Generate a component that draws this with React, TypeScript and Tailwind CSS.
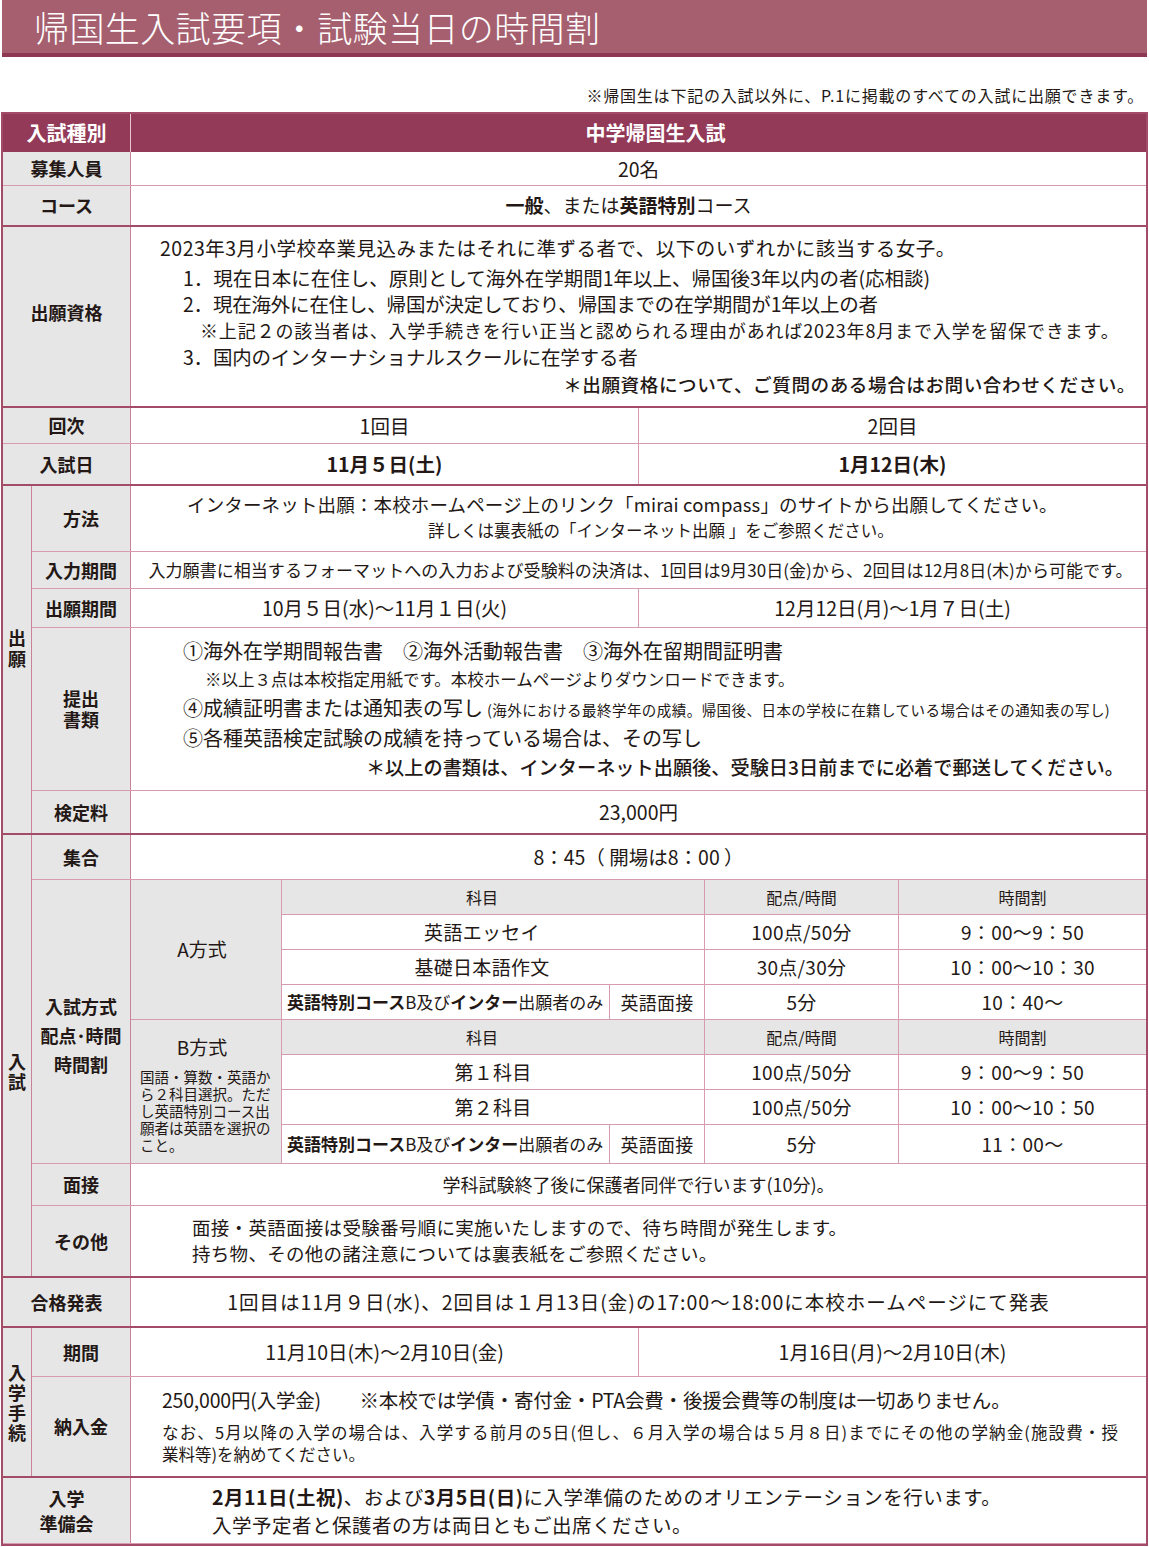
import React from "react";

const gray = "bg-[#e6e6e6]";

function Row({
  h,
  label,
  children,
  dark,
  labelClass = "",
}: {
  h: string;
  label: React.ReactNode;
  children: React.ReactNode;
  dark?: boolean;
  labelClass?: string;
}) {
  return (
    <div
      className={`flex ${h} ${dark ? "border-b-2 border-[#a24c67]" : "border-b border-[#d69bb0]"}`}
    >
      <div
        className={`w-[128px] shrink-0 bg-[#e6e6e6] border-r border-[#c98298] flex flex-col items-center justify-center font-bold text-[18px] leading-[25px] text-center ${labelClass}`}
      >
        {label}
      </div>
      <div className="flex-1 min-w-0 flex">{children}</div>
    </div>
  );
}

function Sub({
  h,
  label,
  children,
  last,
  labelClass = "",
}: {
  h: string;
  label: React.ReactNode;
  children: React.ReactNode;
  last?: boolean;
  labelClass?: string;
}) {
  return (
    <div className={`flex ${h} ${last ? "" : "border-b border-[#d69bb0]"}`}>
      <div
        className={`w-[99px] shrink-0 bg-[#e6e6e6] border-r border-[#c98298] flex flex-col items-center justify-center font-bold text-[18px] leading-[21px] text-center ${labelClass}`}
      >
        {label}
      </div>
      <div className="flex-1 min-w-0 flex">{children}</div>
    </div>
  );
}

function Halves({ a, b, bold }: { a: React.ReactNode; b: React.ReactNode; bold?: boolean }) {
  return (
    <div className={`flex-1 flex text-[19.5px] ${bold ? "font-bold" : ""}`}>
      <div className="w-[508px] shrink-0 border-r border-[#d69bb0] flex items-center justify-center">{a}</div>
      <div className="flex-1 flex items-center justify-center">{b}</div>
    </div>
  );
}

function ExamHead() {
  return (
    <div className="flex h-[35px] border-b border-[#d69bb0] bg-[#e6e6e6] text-[16px]">
      <div className="w-[423px] shrink-0 border-r border-[#d69bb0] flex items-center justify-center pr-[22px]">科目</div>
      <div className="w-[194px] shrink-0 border-r border-[#d69bb0] flex items-center justify-center">配点/時間</div>
      <div className="flex-1 flex items-center justify-center">時間割</div>
    </div>
  );
}

function ExamRow({ s, p, t, shift }: { s: string; p: string; t: string; shift?: boolean }) {
  return (
    <div className="flex h-[35px] border-b border-[#d69bb0] text-[19px] tracking-[0.3px]">
      <div
        className={`w-[423px] shrink-0 border-r border-[#d69bb0] flex items-center justify-center ${shift ? "pr-[22px]" : ""}`}
      >
        {s}
      </div>
      <div className="w-[194px] shrink-0 border-r border-[#d69bb0] flex items-center justify-center">{p}</div>
      <div className="flex-1 flex items-center justify-center">{t}</div>
    </div>
  );
}

function ExamInterview({ t, last }: { t: string; last?: boolean }) {
  return (
    <div className={`flex ${last ? "h-[38px]" : "h-[34px]"} text-[19px] tracking-[0.3px]`}>
      <div className="w-[328px] shrink-0 border-r border-[#d69bb0] flex items-center pl-[5px] text-[17px] tracking-normal whitespace-nowrap">
        <b>英語特別コース</b>B及び<b>インター</b>出願者のみ
      </div>
      <div className="w-[95px] shrink-0 border-r border-[#d69bb0] flex items-center justify-center text-[18px]">英語面接</div>
      <div className="w-[194px] shrink-0 border-r border-[#d69bb0] flex items-center justify-center">5分</div>
      <div className="flex-1 flex items-center justify-center">{t}</div>
    </div>
  );
}

export default function App() {
  return (
    <div className="w-[1149px] min-h-[1547px] bg-white text-[#231815] font-['Noto_Sans_CJK_JP','Noto_Sans',sans-serif]">
      <div className="mx-[2px] h-[57px] bg-[#a65f6f] border-b-4 border-[#8f3853] flex items-center pl-[32px]">
        <h1 className="text-white text-[35px] font-light leading-none tracking-[0.4px]">帰国生入試要項・試験当日の時間割</h1>
      </div>
      <div className="h-[55px] flex items-end justify-end pr-[5px] pb-[7px] text-[16px] leading-[20px] tracking-[0.8px]">
        ※帰国生は下記の入試以外に、P.1に掲載のすべての入試に出願できます。
      </div>

      <div className="ml-[1px] w-[1147px] border-2 border-[#a24c67]">
        {/* header */}
        <div className="flex h-[38px] bg-[#933a58] text-white font-bold text-[20px]">
          <div className="w-[128px] shrink-0 border-r border-[#e9c6d1] flex items-center justify-center">入試種別</div>
          <div className="flex-1 flex items-center justify-center pl-[34px]">中学帰国生入試</div>
        </div>

        <Row h="h-[34px]" label="募集人員">
          <div className="flex-1 flex items-center justify-center text-[19.5px]">20名</div>
        </Row>
        <Row h="h-[41px]" label="コース" dark>
          <div className="flex-1 flex items-center justify-center text-[19px] pr-[20px]">
            <b>一般</b>、または<b>英語特別</b>コース
          </div>
        </Row>
        <Row h="h-[181px]" label="出願資格" dark labelClass="pb-[8px]">
          <div className="flex-1 flex flex-col pt-[7px] text-[19.5px] whitespace-nowrap">
            <div className="pl-[29px] h-[28px] leading-[28px] mb-[2px] tracking-[0.5px]">
              2023年3月小学校卒業見込みまたはそれに準ずる者で、以下のいずれかに該当する女子。
            </div>
            <div className="pl-[52px] h-[27px] leading-[27px]">
              1．現在日本に在住し、原則として海外在学期間1年以上、帰国後3年以内の者(応相談)
            </div>
            <div className="pl-[52px] h-[26px] leading-[26px] tracking-[-0.2px]">
              2．現在海外に在住し、帰国が決定しており、帰国までの在学期間が1年以上の者
            </div>
            <div className="pl-[69px] h-[27px] leading-[27px] text-[18px] tracking-[0.85px]">
              ※上記２の該当者は、入学手続きを行い正当と認められる理由があれば2023年8月まで入学を留保できます。
            </div>
            <div className="pl-[52px] h-[26px] leading-[26px] tracking-[-0.2px]">3．国内のインターナショナルスクールに在学する者</div>
            <div className="pr-[10px] text-right h-[27px] leading-[27px] text-[18.6px] font-medium tracking-[0.55px]">
              ＊出願資格について、ご質問のある場合はお問い合わせください。
            </div>
          </div>
        </Row>
        <Row h="h-[36px]" label="回次">
          <Halves a="1回目" b="2回目" />
        </Row>
        <Row h="h-[42px]" label="入試日" dark>
          <Halves a="11月５日(土)" b="1月12日(木)" bold />
        </Row>

        {/* 出願 group */}
        <div className="flex h-[349px] border-b-2 border-[#a24c67]">
          <div className={`w-[29px] shrink-0 ${gray} border-r border-[#c98298] flex flex-col items-center justify-center font-bold text-[18px] leading-[21px] pb-[24px]`}>
            <span>出</span>
            <span>願</span>
          </div>
          <div className="flex-1 flex flex-col min-w-0">
            <Sub h="h-[66px]" label="方法">
              <div className="flex-1 flex flex-col justify-center pb-[3px] whitespace-nowrap">
                <div className="pl-[56px] text-[18.5px] leading-[26px] tracking-[0.15px]">
                  インターネット出願：本校ホームページ上のリンク「mirai compass」のサイトから出願してください。
                </div>
                <div className="pl-[297px] text-[16.5px] leading-[26px]">詳しくは裏表紙の「インターネット出願 」をご参照ください。</div>
              </div>
            </Sub>
            <Sub h="h-[37px]" label="入力期間">
              <div className="flex-1 flex items-center justify-center text-[17px] whitespace-nowrap pl-[4px] tracking-[0.05px]">
                入力願書に相当するフォーマットへの入力および受験料の決済は、1回目は9月30日(金)から、2回目は12月8日(木)から可能です。
              </div>
            </Sub>
            <Sub h="h-[39px]" label="出願期間">
              <Halves a="10月５日(水)〜11月１日(火)" b="12月12日(月)〜1月７日(土)" />
            </Sub>
            <Sub h="h-[163px]" label={<><span>提出</span><span>書類</span></>}>
              <div className="flex-1 flex flex-col pt-[9px] whitespace-nowrap">
                <div className="pl-[52px] h-[28px] leading-[28px] text-[20px]">
                  ①海外在学期間報告書　②海外活動報告書　③海外在留期間証明書
                </div>
                <div className="pl-[74px] h-[28px] leading-[28px] text-[16.5px]">
                  ※以上３点は本校指定用紙です。本校ホームページよりダウンロードできます。
                </div>
                <div className="pl-[52px] h-[30px] leading-[30px] text-[20px]">
                  ④成績証明書または通知表の写し
                  <span className="text-[14.5px] ml-[4px] tracking-[0.45px]">
                    (海外における最終学年の成績。帰国後、日本の学校に在籍している場合はその通知表の写し)
                  </span>
                </div>
                <div className="pl-[52px] h-[30px] leading-[30px] text-[20px]">
                  ⑤各種英語検定試験の成績を持っている場合は、その写し
                </div>
                <div className="pr-[22px] text-right h-[28px] leading-[28px] text-[19.2px] font-medium">
                  ＊以上の書類は、インターネット出願後、受験日3日前までに必着で郵送してください。
                </div>
              </div>
            </Sub>
            <Sub h="h-[42px]" label="検定料" last>
              <div className="flex-1 flex items-center justify-center text-[19.5px]">23,000円</div>
            </Sub>
          </div>
        </div>

        {/* 入試 group */}
        <div className="flex h-[443px] border-b-2 border-[#a24c67]">
          <div className={`w-[29px] shrink-0 ${gray} border-r border-[#c98298] flex flex-col items-center justify-center font-bold text-[18px] leading-[20px] pt-[30px]`}>
            <span>入</span>
            <span>試</span>
          </div>
          <div className="flex-1 flex flex-col min-w-0">
            <Sub h="h-[45px]" label="集合">
              <div className="flex-1 flex items-center justify-center text-[19.5px]">8：45（ 開場は8：00 ）</div>
            </Sub>
            <Sub
              h="h-[284px]"
              labelClass="leading-[29px] pt-[28px]"
              label={
                <>
                  <span>入試方式</span>
                  <span>配点･時間</span>
                  <span>時間割</span>
                </>
              }
            >
              <div className="flex-1 flex flex-col">
                <div className="flex h-[140px] border-b border-[#d69bb0]">
                  <div className={`w-[151px] shrink-0 ${gray} border-r border-[#d69bb0] flex items-center justify-center text-[19px] pr-[8px]`}>
                    A方式
                  </div>
                  <div className="flex-1 flex flex-col">
                    <ExamHead />
                    <ExamRow s="英語エッセイ" p="100点/50分" t="9：00〜9：50" shift />
                    <ExamRow s="基礎日本語作文" p="30点/30分" t="10：00〜10：30" shift />
                    <ExamInterview t="10：40〜" />
                  </div>
                </div>
                <div className="flex h-[143px]">
                  <div className={`w-[151px] shrink-0 ${gray} border-r border-[#d69bb0] flex flex-col pt-[15px]`}>
                    <div className="text-[19px] leading-[24px] text-center pr-[8px]">B方式</div>
                    <div className="mt-[9px] pl-[9px] text-[14.5px] leading-[17px] whitespace-nowrap">
                      国語・算数・英語か
                      <br />
                      ら２科目選択。ただ
                      <br />
                      し英語特別コース出
                      <br />
                      願者は英語を選択の
                      <br />
                      こと。
                    </div>
                  </div>
                  <div className="flex-1 flex flex-col">
                    <ExamHead />
                    <ExamRow s="第１科目" p="100点/50分" t="9：00〜9：50" />
                    <ExamRow s="第２科目" p="100点/50分" t="10：00〜10：50" />
                    <ExamInterview t="11：00〜" last />
                  </div>
                </div>
              </div>
            </Sub>
            <Sub h="h-[42px]" label="面接">
              <div className="flex-1 flex items-center justify-center text-[18px]">
                学科試験終了後に保護者同伴で行います(10分)。
              </div>
            </Sub>
            <Sub h="h-[70px]" label="その他" last>
              <div className="flex-1 flex flex-col justify-center pl-[61px] text-[18.5px] leading-[26px] pb-[3px] tracking-[0.3px]">
                <div>面接・英語面接は受験番号順に実施いたしますので、待ち時間が発生します。</div>
                <div>持ち物、その他の諸注意については裏表紙をご参照ください。</div>
              </div>
            </Sub>
          </div>
        </div>

        <Row h="h-[50px]" label="合格発表" dark>
          <div className="flex-1 flex items-center justify-center text-[19.5px] whitespace-nowrap tracking-[1px]">
            1回目は11月９日(水)、2回目は１月13日(金)の17:00〜18:00に本校ホームページにて発表
          </div>
        </Row>

        {/* 入学手続 group */}
        <div className="flex h-[150px] border-b-2 border-[#a24c67]">
          <div className={`w-[29px] shrink-0 ${gray} border-r border-[#c98298] flex flex-col items-center justify-center font-bold text-[18px] leading-[20px]`}>
            <span>入</span>
            <span>学</span>
            <span>手</span>
            <span>続</span>
          </div>
          <div className="flex-1 flex flex-col min-w-0">
            <Sub h="h-[49px]" label="期間">
              <Halves a="11月10日(木)〜2月10日(金)" b="1月16日(月)〜2月10日(木)" />
            </Sub>
            <Sub h="h-[99px]" label="納入金" last>
              <div className="flex-1 flex flex-col pl-[31px] pt-[10px] whitespace-nowrap">
                <div className="h-[26px] leading-[26px] text-[19.5px] tracking-[-0.2px]">
                  250,000円(入学金)　　※本校では学債・寄付金・PTA会費・後援会費等の制度は一切ありません。
                </div>
                <div className="w-[956px] h-[22px] leading-[22px] mt-[8px] text-[16.5px] text-justify [text-align-last:justify]">
                  なお、5月以降の入学の場合は、入学する前月の5日(但し、６月入学の場合は５月８日)までにその他の学納金(施設費・授
                </div>
                <div className="h-[22px] leading-[22px] text-[16.5px]">業料等)を納めてください。</div>
              </div>
            </Sub>
          </div>
        </div>

        <Row
          h="h-[66px]"
          label={
            <>
              <span>入学</span>
              <span>準備会</span>
            </>
          }
        >
          <div className="flex-1 flex flex-col justify-center pl-[81px] text-[19.5px] leading-[28px] tracking-[0.5px]">
            <div>
              <b>2月11日(土祝)</b>、および<b>3月5日(日)</b>に入学準備のためのオリエンテーションを行います。
            </div>
            <div>入学予定者と保護者の方は両日ともご出席ください。</div>
          </div>
        </Row>
      </div>
    </div>
  );
}
